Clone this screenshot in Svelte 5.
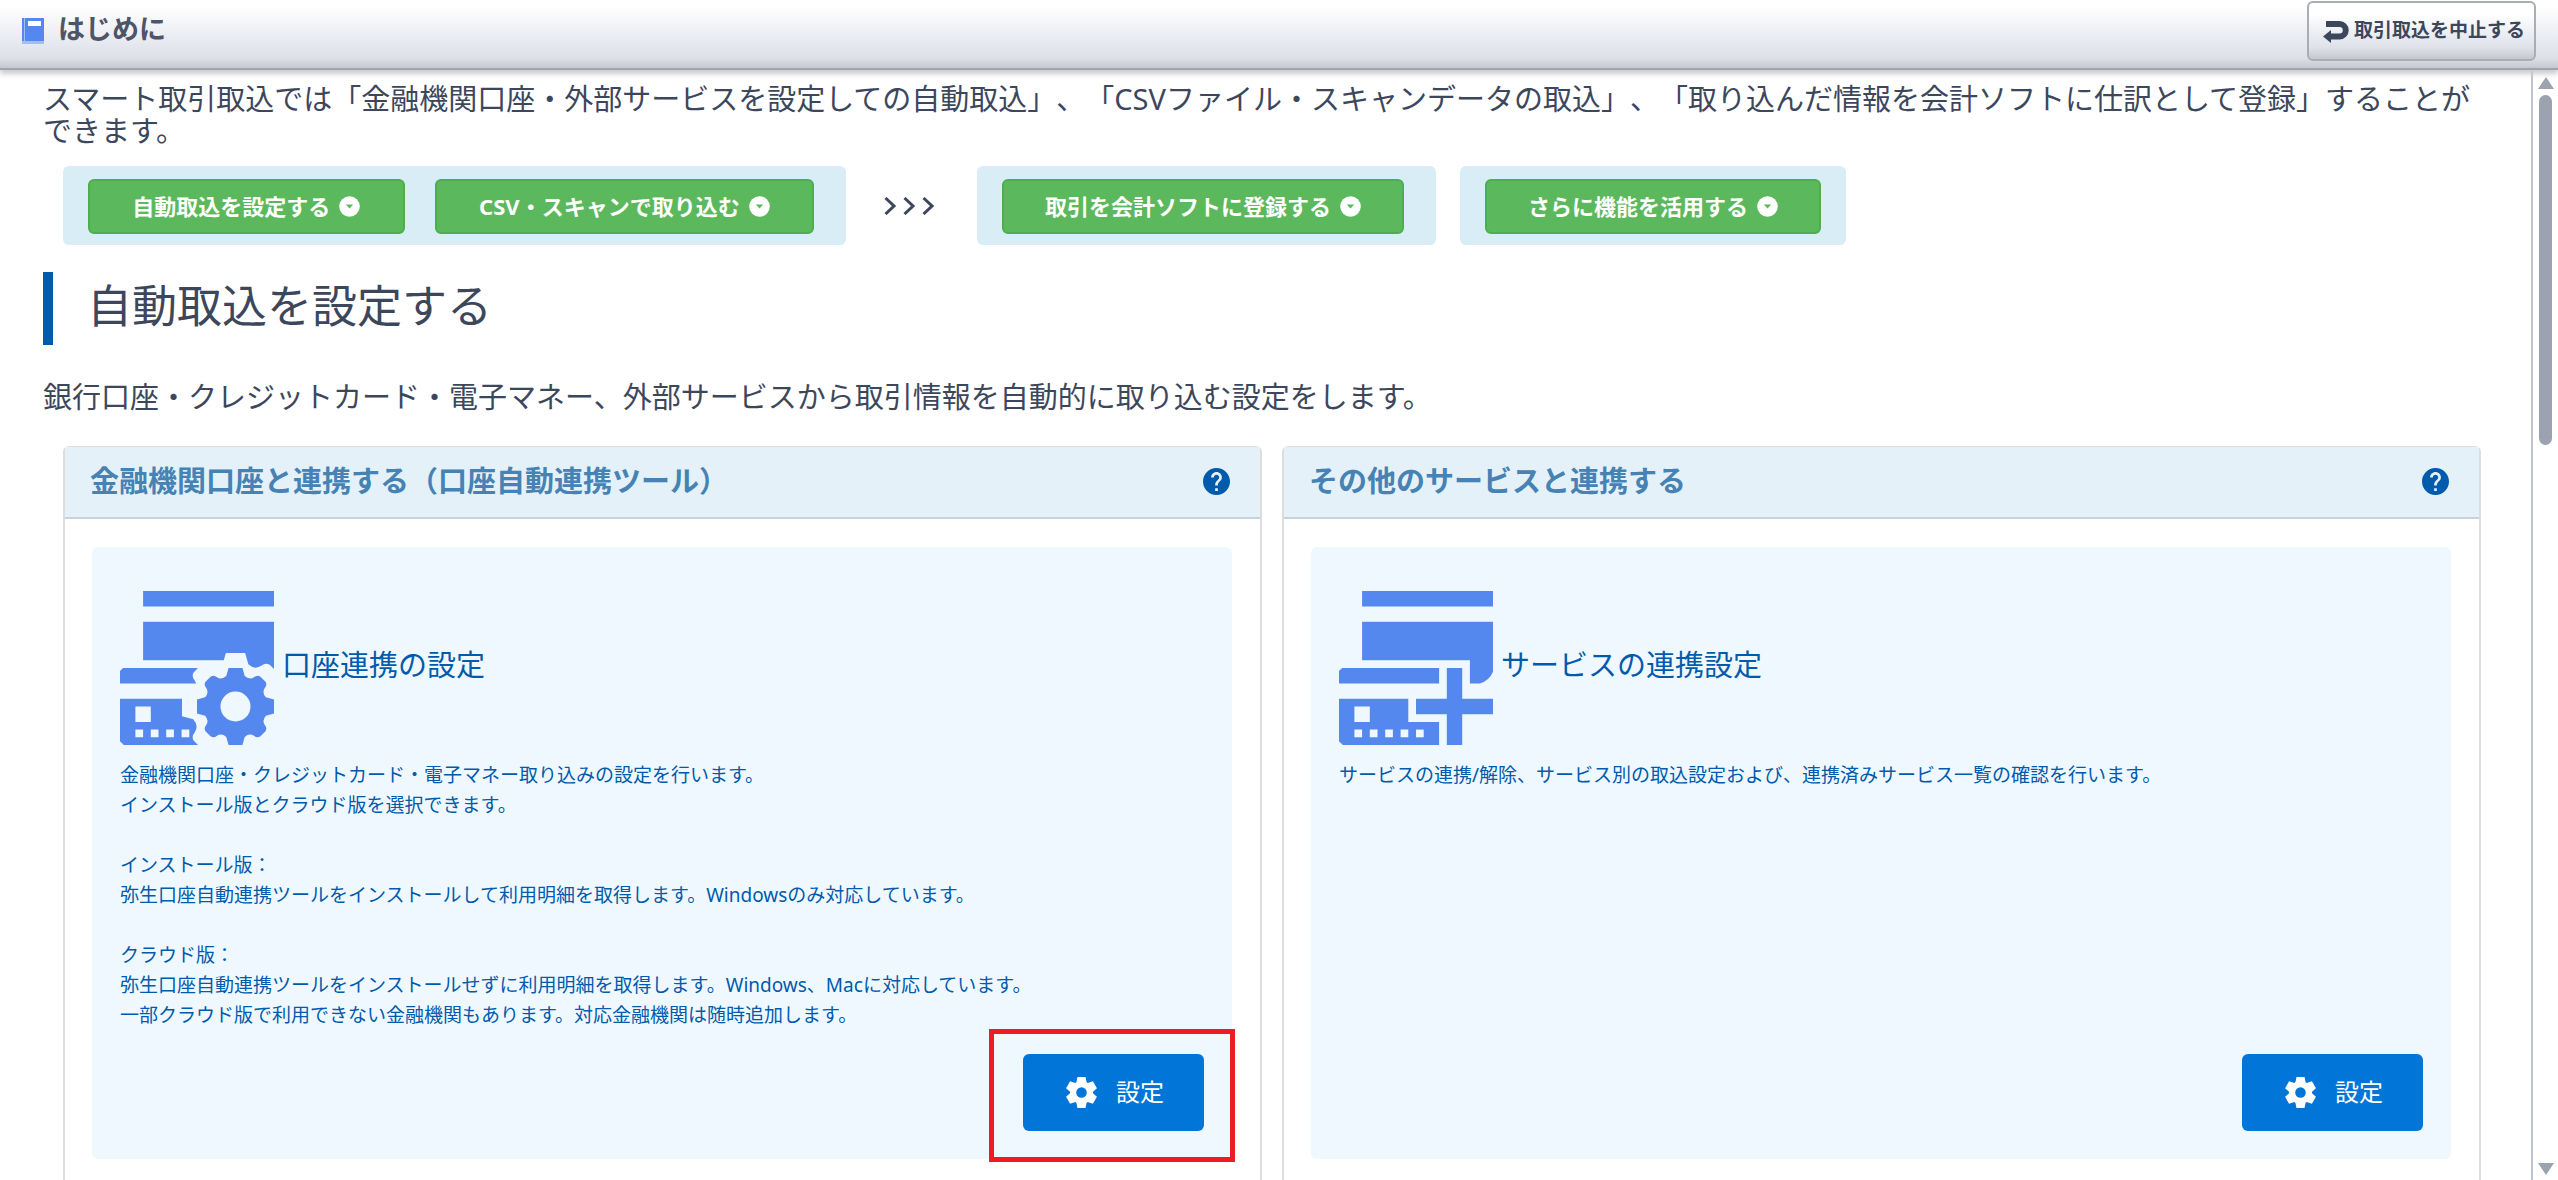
<script lang="ts">
	interface Step {
		label: string;
		target: string;
	}

	interface Panel {
		heading: string;
		title: string;
		icon: 'gear' | 'plus';
		lines: string[];
		marked: boolean;
	}

	const importSteps: Step[] = [
		{ label: '自動取込を設定する', target: '#auto' },
		{ label: 'CSV・スキャンで取り込む', target: '#scan' }
	];
	const registerSteps: Step[] = [{ label: '取引を会計ソフトに登録する', target: '#register' }];
	const moreSteps: Step[] = [{ label: 'さらに機能を活用する', target: '#more' }];

	const panels: Panel[] = [
		{
			heading: '金融機関口座と連携する（口座自動連携ツール）',
			title: '口座連携の設定',
			icon: 'gear',
			lines: [
				'金融機関口座・クレジットカード・電子マネー取り込みの設定を行います。',
				'インストール版とクラウド版を選択できます。',
				'',
				'インストール版：',
				'弥生口座自動連携ツールをインストールして利用明細を取得します。Windowsのみ対応しています。',
				'',
				'クラウド版：',
				'弥生口座自動連携ツールをインストールせずに利用明細を取得します。Windows、Macに対応しています。',
				'一部クラウド版で利用できない金融機関もあります。対応金融機関は随時追加します。'
			],
			marked: true
		},
		{
			heading: 'その他のサービスと連携する',
			title: 'サービスの連携設定',
			icon: 'plus',
			lines: [
				'サービスの連携/解除、サービス別の取込設定および、連携済みサービス一覧の確認を行います。'
			],
			marked: false
		}
	];

	const gear =
		'M.9-5L1.2-3.95Q1.8-3.4 2.4-3.8Q2.8-4.15 3.2-3.9L3.9-3.2Q4.15-2.8 3.8-2.4Q3.4-1.8 3.95-1.2L5-.9' +
		'L5 .9L3.95 1.2Q3.4 1.8 3.8 2.4Q4.15 2.8 3.9 3.2L3.2 3.9Q2.8 4.15 2.4 3.8Q1.8 3.4 1.2 3.95L.9 5' +
		'L-.9 5L-1.2 3.95Q-1.8 3.4-2.4 3.8Q-2.8 4.15-3.2 3.9L-3.9 3.2Q-4.15 2.8-3.8 2.4Q-3.4 1.8-3.95 1.2L-5 .9' +
		'L-5-.9L-3.95-1.2Q-3.4-1.8-3.8-2.4Q-4.15-2.8-3.9-3.2L-3.2-3.9Q-2.8-4.15-2.4-3.8Q-1.8-3.4-1.2-3.95L-.9-5Z';
</script>

{#snippet stepGroup(steps: Step[])}
	<div class="group">
		{#each steps as step}
			<a class="step" href={step.target}>
				{step.label}
				<svg class="step-icon" viewBox="0 0 21 21" aria-hidden="true">
					<circle cx="10.5" cy="10.5" r="10.3" fill="#fff" />
					<path d="M6.8 8.6h7.4l-3.7 4z" fill="#5cb85c" />
				</svg>
			</a>
		{/each}
	</div>
{/snippet}

<div class="app">
	<header>
		<svg class="book" viewBox="0 0 22 26" aria-hidden="true">
			<path d="M0 0h22v26H0z" fill="#5588ee" />
			<path d="M0 23h22v3H0z" fill="#a3bdf5" />
			<path d="M2 0h1v23H2z" fill="#a3bdf5" />
			<path d="M6 3h13v5H6z" fill="#fff" />
		</svg>
		<h1>はじめに</h1>
		<button class="cancel" type="button">
			<svg class="back" viewBox="0 0 26 23" aria-hidden="true">
				<path d="M3 4h13.5a5.5 5.5 0 0 1 0 12.500H6" fill="none" stroke="#3d475c" stroke-width="6" />
				<path d="M0 16.500L8 10v13z" fill="#3d475c" />
			</svg>
			<span>取引取込を中止する</span>
		</button>
	</header>

	<div class="body">
		<main>
			<p class="intro">
				スマート取引取込では「金融機関口座・外部サービスを設定しての自動取込」、「CSVファイル・スキャンデータの取込」、「取り込んだ情報を会計ソフトに仕訳として登録」することができます。
			</p>

			<nav class="steps">
				{@render stepGroup(importSteps)}
				<svg class="arrows" viewBox="0 0 50 18" aria-hidden="true">
					<path
						d="M1.500 1l8.500 8-8.500 8M20.500 1l8.500 8-8.500 8M39.500 1l8.500 8-8.500 8"
						fill="none"
						stroke="#3d475c"
						stroke-width="3"
					/>
				</svg>
				{@render stepGroup(registerSteps)}
				{@render stepGroup(moreSteps)}
			</nav>

			<h2 id="auto">自動取込を設定する</h2>
			<p class="lead">
				銀行口座・クレジットカード・電子マネー、外部サービスから取引情報を自動的に取り込む設定をします。
			</p>

			<div class="panels">
				{#each panels as panel}
					<section class="panel">
						<div class="panel-head">
							<h3>{panel.heading}</h3>
							<button class="help" type="button" aria-label="ヘルプ">
								<svg viewBox="2 2 20 20" aria-hidden="true">
									<path
										fill="#005bac"
										d="M12 2C6.480 2 2 6.480 2 12s4.480 10 10 10 10-4.480 10-10S17.520 2 12 2zm1 17h-2v-2h2v2zm2.070-7.750l-.9.920C13.450 12.900 13 13.500 13 15h-2v-.5c0-1.100.450-2.100 1.170-2.830l1.240-1.260c.370-.360.590-.860.590-1.410 0-1.100-.9-2-2-2s-2 .9-2 2H8c0-2.210 1.790-4 4-4s4 1.790 4 4c0 .880-.360 1.680-.930 2.250z"
									/>
								</svg>
							</button>
						</div>
						<div class="panel-body">
							<div class="card">
								<div class="card-title">
									<svg class="card-icon" viewBox="0 0 20 20" fill="#5588ee" aria-hidden="true">
										<path d="M3 0h17v2H3z" />
										{#if panel.icon == 'gear'}
											<path d="M3 4h17v7h-4V9H3z" />
											<path d="M.4 10h9.700v2H0v-1.600z" />
											<path d="M0 14h10.200v6H.5L0 19.500z" />
											<path d="M8.100 13.500h3v2.500l-3 0z" fill="#f0f8ff" />
											<path d={gear} transform="translate(15 15) scale(1.39)" fill="#f0f8ff" />
											<path d={gear} transform="translate(15 15)" />
											<circle cx="15" cy="15" r="1.950" fill="#f0f8ff" />
										{:else}
											<path d="M3 4h17v6.500Q19.500 11.700 18.300 12H17V9H3z" />
											<path d="M.4 10H13v2H0v-1.600z" />
											<path d="M0 14h9v3h4v3H.5L0 19.500z" />
											<path d="M14 10h2v4h4v2h-4v4h-2v-4h-4v-2h4z" />
											<path d="M10 18h1v1h-1z" fill="#f0f8ff" />
										{/if}
										<path
											d="M2 15h2v2H2zM2 18h1v1H2zM4 18h1v1H4zM6 18h1v1H6zM8 18h1v1H8z"
											fill="#f0f8ff"
										/>
									</svg>
									<h4>{panel.title}</h4>
								</div>
								<p class="card-text">{panel.lines.join('\n')}</p>
								<div class="action">
									<button class="setting" type="button">
										<svg viewBox="-5 -5 10 10" aria-hidden="true">
											<g fill="#fff">
												<circle r="3.700" />
												{#each [0, 60, 120] as angle}
													<path
														d="M-1.300-5h2.600l.5 2.500v5L1.300 5h-2.600l-.5-2.500v-5z"
														transform="rotate({angle})"
													/>
												{/each}
											</g>
											<circle r="1.700" fill="#0275d8" />
										</svg>
										<span>設定</span>
									</button>
									{#if panel.marked}
										<span class="marker"></span>
									{/if}
								</div>
							</div>
						</div>
					</section>
				{/each}
			</div>
		</main>

		<div class="scrollbar" aria-hidden="true">
			<svg viewBox="0 0 16 12"><path d="M8 0l8 12H0z" fill="#9ca2b0" /></svg>
			<div class="track"><div class="thumb"></div></div>
			<svg viewBox="0 0 16 12"><path d="M0 0h16L8 12z" fill="#9ca2b0" /></svg>
		</div>
	</div>
</div>

<style>
	:global(body) {
		margin: 0;
		background: #fff;
	}

	.app {
		display: flex;
		flex-direction: column;
		height: 100vh;
		overflow: hidden;
		color: #3d475c;
		font-family: 'Noto Sans', 'Noto Sans CJK JP', sans-serif;
		font-size: 29px;
		line-height: 32px;
		text-spacing-trim: space-all;
	}

	h1,
	h2,
	h3,
	h4,
	p {
		margin: 0;
	}

	button {
		font-family: inherit;
		cursor: pointer;
	}

	header {
		position: relative;
		z-index: 1;
		display: flex;
		align-items: center;
		padding: 1px 22px 7px;
		border-bottom: 2px solid #a0a4ae;
		background: linear-gradient(#fff 10%, #dde0e9 85%, #c5c8d1);
		box-shadow: 0 4px 5px #ccc;
	}

	.book {
		width: 22px;
		height: 26px;
	}

	h1 {
		margin-left: 14px;
		padding-bottom: 4px;
		color: #4d5566;
		font-size: 27px;
	}

	.cancel {
		display: flex;
		align-items: center;
		gap: 5px;
		height: 60px;
		margin-left: auto;
		padding: 0 9px 0 14px;
		border: 2px solid #aaadb3;
		border-radius: 6px;
		background: linear-gradient(#fff 20%, #dfe1ea 80%, #c5c8d1);
		color: #3d475c;
		font-size: 19px;
		font-weight: bold;
	}

	.cancel span,
	.setting span {
		padding-bottom: 4px;
	}

	.back {
		width: 26px;
		height: 23px;
	}

	.body {
		display: flex;
		flex: 1;
		min-height: 0;
	}

	main {
		flex: 1;
		padding: 13px 50px 0 43px;
		overflow: hidden;
	}

	.steps {
		display: flex;
		align-items: center;
		margin: 19px 0 0 20px;
	}

	.group {
		display: flex;
		gap: 30px;
		padding: 13px 32px 11px 25px;
		border-radius: 6px;
		background: #d9edf7;
	}

	.group:first-child {
		min-width: 726px;
	}

	.group:last-child {
		margin-left: 24px;
		padding-right: 25px;
	}

	.step {
		display: flex;
		flex: auto;
		align-items: center;
		justify-content: center;
		gap: 9px;
		padding: 10px 41px 11px;
		border: 2px solid #4cae4c;
		border-radius: 6px;
		background: #5cb85c;
		color: #fff;
		font-size: 22px;
		font-weight: bold;
		line-height: 30px;
		text-decoration: none;
	}

	.step-icon {
		width: 21px;
		height: 21px;
	}

	.arrows {
		width: 50px;
		height: 18px;
		margin: 0 43px 0 38px;
	}

	h2 {
		margin-top: 27px;
		padding: 0 0 5px 34px;
		border-left: 10px solid #005bac;
		font-size: 45px;
		font-weight: normal;
		line-height: 68px;
	}

	.lead {
		margin-top: 36px;
	}

	.panels {
		display: grid;
		grid-template-columns: 1fr 1fr;
		gap: 20px;
		margin: 33px 0 0 20px;
	}

	.panel {
		border: 2px solid #ddd;
		border-top-width: 1px;
		border-radius: 6px;
		background: #fff;
	}

	.panel-head {
		display: flex;
		align-items: center;
		justify-content: space-between;
		padding: 18px 30px 20px 25px;
		border-bottom: 2px solid #c5d3dd;
		background: #e4f1f9;
	}

	h3 {
		color: #4682b4;
		font-size: 29px;
	}

	.help {
		width: 27px;
		height: 27px;
		padding: 0;
		border: 0;
		background: none;
	}

	.help svg {
		display: block;
	}

	.panel-body {
		padding: 28px 28px 60px 27px;
	}

	.card {
		display: flex;
		flex-direction: column;
		min-height: 540px;
		padding: 44px 28px 28px;
		border-radius: 6px;
		background: #f0f8ff;
		color: #005bac;
	}

	.card-title {
		display: flex;
		align-items: center;
		gap: 8px;
	}

	.card-icon {
		width: 154px;
		height: 154px;
	}

	h4 {
		padding-bottom: 6px;
		font-size: 29px;
		font-weight: normal;
	}

	.card-text {
		margin: 15px 0 24px;
		font-size: 19px;
		line-height: 30px;
		white-space: pre-line;
	}

	.action {
		position: relative;
		align-self: flex-end;
		margin-top: auto;
	}

	.setting {
		display: flex;
		align-items: center;
		gap: 19px;
		height: 77px;
		padding: 0 40px 0 43px;
		border: 0;
		border-radius: 6px;
		background: #0275d8;
		color: #fff;
		font-size: 24px;
	}

	.setting svg {
		width: 31px;
		height: 31px;
	}

	.marker {
		position: absolute;
		inset: -25px -31px -31px -34px;
		border: 5px solid #ed1c24;
		pointer-events: none;
	}

	.scrollbar {
		display: flex;
		flex-direction: column;
		align-items: center;
		width: 25px;
		padding: 7px 0 5px;
		border-left: 2px solid #c0c4d0;
	}

	.scrollbar svg {
		width: 16px;
		height: 12px;
	}

	.track {
		flex: 1;
		padding: 6px 0;
	}

	.thumb {
		width: 13px;
		height: 33%;
		border-radius: 7px;
		background: #9ca2b0;
	}
</style>
